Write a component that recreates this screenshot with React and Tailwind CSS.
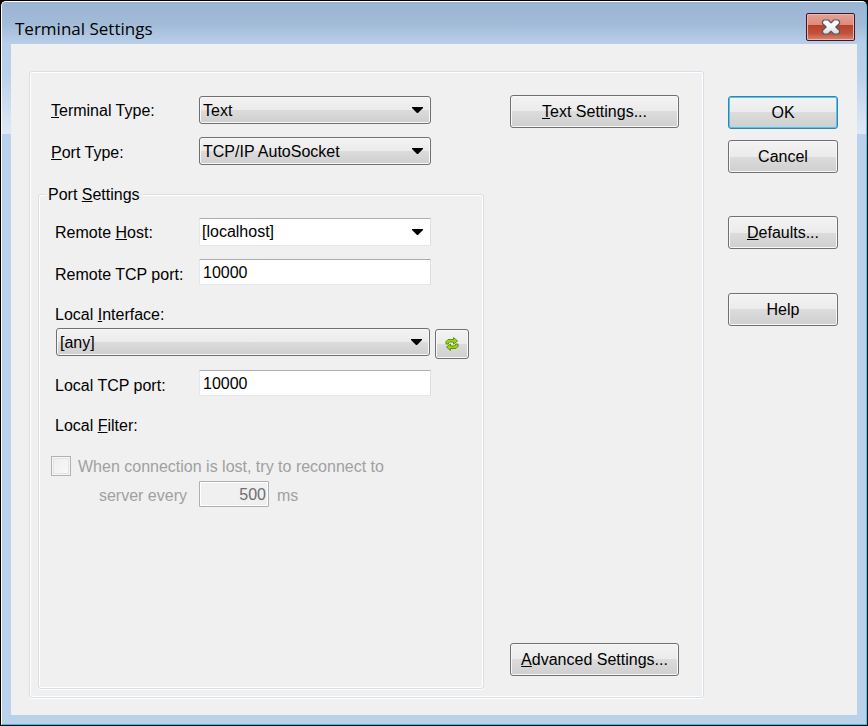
import React from "react";

const FACE =
  "bg-[linear-gradient(#f3f3f3_0%,#ebebeb_50%,#dcdcdc_50%,#cfcfcf_100%)] border border-[#707070] rounded-[3px] shadow-[inset_0_0_0_1px_#f8f8f8]";
const FIELD =
  "h-[26px] border border-[#e2e8ee] border-t-[#abadb3] border-r-[#dbdfe6] bg-white px-[3px] pt-px rounded-[1px] outline-none";

function Button({ children, primary, className = "" }) {
  return (
    <button
      type="button"
      className={`h-[33px] w-full leading-5 ${
        primary
          ? "bg-[linear-gradient(#f3f3f3_0%,#ebebeb_50%,#dcdcdc_50%,#cfcfcf_100%)] border border-[#3c7fb1] rounded-[3px] shadow-[inset_0_0_0_1px_#47c8f5]"
          : FACE
      } ${className}`}
    >
      {children}
    </button>
  );
}

function Select({ id, value, label, editable }) {
  return (
    <div className="relative h-7 min-w-0 flex-1">
      <select
        id={id}
        aria-label={label}
        defaultValue={value}
        className={`h-7 w-full appearance-none pr-6 leading-5 outline-none ${
          editable
            ? "rounded-[1px] border border-[#e2e8ee] border-t-[#abadb3] border-r-[#dbdfe6] bg-white pl-[2px]"
            : `pl-[3px] pt-px ${FACE}`
        }`}
      >
        <option>{value}</option>
      </select>
      <svg
        className="pointer-events-none absolute right-[8px] top-[11px]"
        width="11"
        height="6"
        viewBox="0 0 11 6"
        aria-hidden="true"
      >
        <path d="M0 0h11v1L6 6H5L0 1z" fill="#000" />
      </svg>
    </div>
  );
}

function CloseIcon() {
  return (
    <svg width="20" height="17" viewBox="0 0 20 17" aria-hidden="true">
      <defs>
        <linearGradient id="cross" x1="0" y1="0" x2="0" y2="1">
          <stop offset="0" stopColor="#fff" />
          <stop offset="0.5" stopColor="#f8f8f8" />
          <stop offset="1" stopColor="#d6d6d6" />
        </linearGradient>
      </defs>
      <path
        d="M3 1h4.200L10 3.800 12.800 1H17l1.500 1.500v2L14.800 8l3.700 3.500v2L17 15h-4.200L10 12.200 7.200 15H3l-1.500-1.500v-2L5.200 8 1.500 4.500v-2z"
        fill="url(#cross)"
        stroke="#535866"
        strokeWidth="1.200"
        strokeLinejoin="round"
      />
    </svg>
  );
}

function RefreshIcon() {
  return (
    <svg width="14" height="14" viewBox="0 0 14 14" aria-hidden="true">
      <g fill="#a4d40c" stroke="#4f8a08" strokeWidth="0.9" strokeLinejoin="round">
        <path d="M1 7V4.500L3 2.500h5.500v-2L12.500 4 8.500 7V5H4.500L3.500 6v1z" />
        <path d="M13 7v2.500l-2 2H5.500v2L1.500 10l4-3v2h4l1-1V7z" />
      </g>
    </svg>
  );
}

export default function App() {
  return (
    <div className="flex min-h-screen flex-col bg-black p-px font-['Liberation_Sans',Arial,sans-serif] text-[16px] leading-5 text-black">
      <div className="flex flex-1 flex-col rounded-t-[5px] border border-t-white border-l-white border-r-[#35d3f0] border-b-[#1fcbe8] bg-[linear-gradient(#9ab4d3_0px,#a2bbd8_22px,#b8cfe9_42px,#b9d0ea_70px,#dfe9f5_132px,#b9d1ea_132px)] px-[9px] pb-[9px]">
        <header className="flex h-[42px] items-start justify-between">
          <h1 className="pl-1 pt-[15px] font-['Open_Sans','Noto_Sans',sans-serif] text-[17px] leading-6">
            Terminal Settings
          </h1>
          <button
            type="button"
            aria-label="Close"
            className="mr-[2px] mt-[11px] flex h-7 w-[49px] items-center justify-center rounded-[2px] border border-[#431422] bg-[linear-gradient(#e3a297_0%,#dc8a7c_42%,#b8402a_42%,#c4523c_75%,#d88672_100%)] shadow-[inset_0_0_0_1px_#ecb5aa]"
          >
            <CloseIcon />
          </button>
        </header>

        <main className="flex flex-1 gap-6 bg-[#f0f0f0] pb-[17px] pl-[18px] pr-[19px] pt-[27px]">
          <section className="flex min-w-0 flex-1 gap-[26px] rounded-[3px] border border-[#d5dfe5] pb-2 pl-2 pr-6 shadow-[inset_0_0_0_1px_#fff,0_1px_0_#fff]">
            <div className="flex min-w-0 flex-1 flex-col pt-6">
              <div className="mb-[13px] flex items-center pl-[13px] pr-[53px]">
                <label htmlFor="terminal-type" className="w-[148px] pt-[2px]">
                  <u>T</u>erminal Type:
                </label>
                <Select id="terminal-type" value="Text" />
              </div>
              <div className="mb-[18px] flex items-center pl-[13px] pr-[53px]">
                <label htmlFor="port-type" className="w-[148px] pt-[4px]">
                  <u>P</u>ort Type:
                </label>
                <Select id="port-type" value="TCP/IP AutoSocket" />
              </div>

              <fieldset className="min-w-0 flex-1 rounded-[3px] border border-[#d5dfe5] shadow-[inset_0_0_0_1px_#fff,0_1px_0_#fff]">
                <legend className="ml-[6px] bg-[#f0f0f0] px-[3px] pt-[2px]">
                  Port <u>S</u>ettings
                </legend>
                <div className="pl-4 pr-[52px] pt-[13px]">
                  <div className="mb-[13px] flex items-center">
                    <label htmlFor="remote-host" className="w-36 pt-[2px]">
                      Remote <u>H</u>ost:
                    </label>
                    <Select id="remote-host" value="[localhost]" editable />
                  </div>
                  <div className="mb-5 flex h-[26px] items-center">
                    <label htmlFor="remote-port" className="w-36 pt-[6px]">
                      Remote TCP port:
                    </label>
                    <input id="remote-port" defaultValue="10000" className={`min-w-0 flex-1 ${FIELD}`} />
                  </div>
                  <label htmlFor="local-interface" className="mb-[3px] block">
                    Local <u>I</u>nterface:
                  </label>
                </div>
                <div className="mb-[10px] flex h-8 gap-[5px] pl-[17px] pr-[14px]">
                  <Select id="local-interface" value="[any]" />
                  <button
                    type="button"
                    aria-label="Refresh interfaces"
                    className={`mt-px flex h-[30px] w-[34px] items-center justify-center ${FACE}`}
                  >
                    <RefreshIcon />
                  </button>
                </div>
                <div className="pl-4 pr-[52px]">
                  <div className="mb-5 flex h-[26px] items-center">
                    <label htmlFor="local-port" className="w-36 pt-[6px]">
                      Local TCP port:
                    </label>
                    <input id="local-port" defaultValue="10000" className={`min-w-0 flex-1 ${FIELD}`} />
                  </div>
                  <p className="mb-5">
                    Local <u>F</u>ilter:
                  </p>
                </div>
                <div className="mb-[5px] flex h-5 items-center gap-[7px] pl-3 text-[#a0a0a0]">
                  <input
                    id="reconnect"
                    type="checkbox"
                    disabled
                    className="size-5 appearance-none border border-[#b1b1b1] bg-[linear-gradient(135deg,#ececec,#fafafa)] shadow-[inset_0_0_0_1px_#f6f6f6,inset_0_0_0_2px_#e2e4e8]"
                  />
                  <label htmlFor="reconnect" className="pt-[2px]">
                    When connection is lost, try to reconnect to
                  </label>
                </div>
                <div className="flex h-[26px] items-center text-[#a0a0a0]">
                  <label htmlFor="interval" className="w-40 pr-3 pt-1 text-right">
                    server every
                  </label>
                  <input
                    id="interval"
                    disabled
                    defaultValue="500"
                    className="h-[26px] w-[70px] rounded-[1px] border border-[#afafaf] bg-[#f0f0f0] px-[2px] pt-px text-right text-[#6d6d6d] shadow-[inset_0_0_0_1px_#fff]"
                  />
                  <span className="pl-2 pt-1">ms</span>
                </div>
              </fieldset>
            </div>

            <div className="flex w-[169px] flex-col justify-between pb-[13px] pt-[23px]">
              <Button>
                <u>T</u>ext Settings...
              </Button>
              <Button>
                <u>A</u>dvanced Settings...
              </Button>
            </div>
          </section>

          <aside className="flex w-[110px] flex-col pt-[25px]">
            <Button primary className="mb-[11px]">OK</Button>
            <Button className="mb-[43px]">Cancel</Button>
            <Button className="mb-11">
              <u>D</u>efaults...
            </Button>
            <Button>Help</Button>
          </aside>
        </main>
      </div>
    </div>
  );
}
